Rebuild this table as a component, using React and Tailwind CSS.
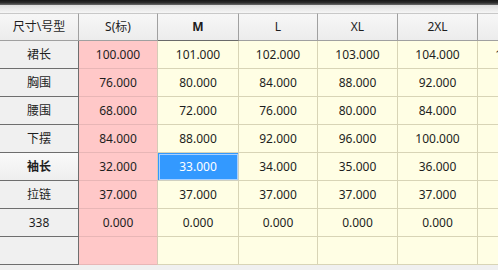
import React from "react";

const cols = ["S(标)", "M", "L", "XL", "2XL", "实"];
const rows = [
  ["裙长", ["100.000", "101.000", "102.000", "103.000", "104.000", "105.000"]],
  ["胸围", ["76.000", "80.000", "84.000", "88.000", "92.000", ""]],
  ["腰围", ["68.000", "72.000", "76.000", "80.000", "84.000", ""]],
  ["下摆", ["84.000", "88.000", "92.000", "96.000", "100.000", ""]],
  ["袖长", ["32.000", "33.000", "34.000", "35.000", "36.000", ""]],
  ["拉链", ["37.000", "37.000", "37.000", "37.000", "37.000", ""]],
  ["338", ["0.000", "0.000", "0.000", "0.000", "0.000", ""]],
  ["", ["", "", "", "", "", ""]],
];

const font = { fontFamily: '"Noto Sans", "Noto Sans CJK SC", sans-serif' };

export default function App() {
  return (
    <div className="w-[498px] h-[270px] overflow-hidden bg-[#f0f0f0] text-[12px] text-[#1e1e1e]" style={font}>
      <div className="h-[5px] bg-gradient-to-b from-[#151515] via-[#2a2a2a] to-[#6a6a6a]" />
      <div className="h-[8px] bg-gradient-to-b from-[#dcdcdc] to-[#f6f6f6]" />
      <div className="grid grid-cols-[79px_79px_81px_79px_80px_80px_80px] w-[558px]">
        <div className="h-[28px] flex items-center justify-center border-t border-r border-b border-t-[#c8c8c8] border-r-[#a0a0a0] border-b-[#a0a0a0] bg-gradient-to-b from-[#f7f7f7] to-[#ececec]">
          尺寸\号型
        </div>
        {cols.map((c, i) => (
          <div
            key={c}
            className={
              "h-[28px] flex items-center justify-center border-t border-r border-b border-t-[#c8c8c8] border-r-[#a0a0a0] bg-gradient-to-b from-[#f7f7f7] to-[#ececec] " +
              (i === 1 ? "font-bold border-b-[#6a6a6a]" : "border-b-[#a0a0a0]")
            }
          >
            {c}
          </div>
        ))}
        {rows.map(([name, vals], r) => (
          <React.Fragment key={r}>
            <div
              className={
                "h-[28px] flex items-center justify-center border-r border-b border-r-[#6e6e6e] border-b-[#6e6e6e] " +
                (r === 4 ? "font-bold bg-gradient-to-b from-[#fafafa] to-[#eeeeee]" : "bg-[#f0f0f0]")
              }
            >
              {name}
            </div>
            {vals.map((v, c) => {
              const sel = r === 4 && c === 1;
              let cls = "h-[28px] flex items-center justify-center border-r border-b ";
              if (sel) cls += "bg-[#3399ff] text-white border-r-[#d0d0c0] border-b-[#d0d0c0] outline outline-1 -outline-offset-2 outline-[#a8d0ff]";
              else if (c === 0) cls += "bg-[#ffc8c8] border-r-[#d7cbb8] border-b-[#e8b6b6]";
              else cls += "bg-[#fffee4] border-r-[#d8d4b6] border-b-[#d8d4b6]";
              return (
                <div key={c} className={cls}>
                  {v}
                </div>
              );
            })}
          </React.Fragment>
        ))}
      </div>
    </div>
  );
}
